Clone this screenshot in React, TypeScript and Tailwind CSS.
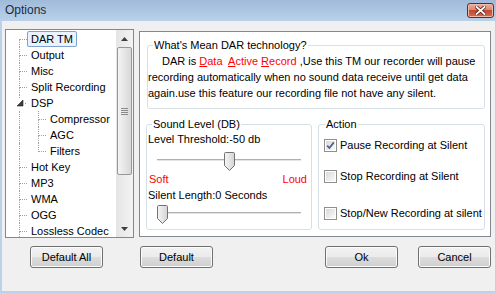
import type { ReactNode } from 'react';

type TreeItem = {
  label: string;
  child?: boolean;
  selected?: boolean;
  expander?: boolean;
  first?: boolean;
  lastChild?: boolean;
};

const treeItems: TreeItem[] = [
  { label: 'DAR TM', selected: true, first: true },
  { label: 'Output' },
  { label: 'Misc' },
  { label: 'Split Recording' },
  { label: 'DSP', expander: true },
  { label: 'Compressor', child: true },
  { label: 'AGC', child: true },
  { label: 'Filters', child: true, lastChild: true },
  { label: 'Hot Key' },
  { label: 'MP3' },
  { label: 'WMA' },
  { label: 'OGG' },
  { label: 'Lossless Codec' },
];

function Elbow({ first = false, last = false }: { first?: boolean; last?: boolean }) {
  return (
    <div className="flex w-[8px] shrink-0 flex-col">
      <div
        className={
          first
            ? 'h-[9px] border-b border-dotted border-[#a0a0a0]'
            : 'h-[9px] border-b border-l border-dotted border-[#a0a0a0]'
        }
      />
      <div className={last ? 'flex-1' : 'flex-1 border-l border-dotted border-[#a0a0a0]'} />
    </div>
  );
}

function TreeRow({ item }: { item: TreeItem }) {
  let gutter: ReactNode;
  if (item.expander) {
    gutter = (
      <svg width="21" height="16" className="shrink-0">
        <line x1="13.5" y1="0" x2="13.5" y2="3" stroke="#a0a0a0" strokeDasharray="1 1" />
        <polygon points="17,5 17,11 11,11" fill="#3c3c3c" stroke="#262626" strokeWidth="0.6" />
        <line x1="19" y1="8.5" x2="21" y2="8.5" stroke="#a0a0a0" strokeDasharray="1 1" />
      </svg>
    );
  } else if (item.child) {
    gutter = (
      <>
        <div className="w-[13px] shrink-0" />
        <div className="w-[19px] shrink-0 border-l border-dotted border-[#a0a0a0]" />
        <Elbow last={item.lastChild} />
      </>
    );
  } else {
    gutter = (
      <>
        <div className="w-[13px] shrink-0" />
        <Elbow first={item.first} />
      </>
    );
  }

  return (
    <div className="flex h-[16px] shrink-0 items-stretch">
      {gutter}
      <span
        className={
          item.selected
            ? 'rounded-[2px] border border-[#7da2ce] bg-[#eaf3fd] px-[3px] leading-[14px] whitespace-nowrap'
            : 'border border-transparent px-[3px] leading-[14px] whitespace-nowrap'
        }
      >
        {item.label}
      </span>
    </div>
  );
}

function ScrollBar() {
  return (
    <div className="flex w-[17px] shrink-0 flex-col bg-gradient-to-r from-[#e5e5e5] to-[#f3f3f3]">
      <div className="flex h-[17px] shrink-0 items-center justify-center">
        <svg width="7" height="4">
          <polygon points="3.5,0 7,4 0,4" fill="#3f3f3f" />
        </svg>
      </div>
      <div className="mx-[1px] flex h-[128px] shrink-0 flex-col items-center justify-center gap-[1px] rounded-[2px] border border-[#979797] bg-gradient-to-r from-[#f4f4f4] to-[#d8d8d8]">
        <div className="h-[1px] w-[7px] bg-[#8a8a8a]" />
        <div className="h-[1px] w-[7px] bg-[#8a8a8a]" />
        <div className="h-[1px] w-[7px] bg-[#8a8a8a]" />
        <div className="h-[1px] w-[7px] bg-[#8a8a8a]" />
      </div>
      <div className="flex-1" />
      <div className="flex h-[17px] shrink-0 items-center justify-center">
        <svg width="7" height="4">
          <polygon points="0,0 7,0 3.5,4" fill="#3f3f3f" />
        </svg>
      </div>
    </div>
  );
}

function Trackbar({ value, min, max }: { value: number; min: number; max: number }) {
  const left = Math.round(((value - min) / (max - min)) * (144 - 11));
  return (
    <div className="relative ml-[10px] h-[19px] w-[144px]">
      <div className="absolute left-0 right-0 top-[7px] h-[2px] border-t border-[#b0b0b0] bg-[#e4e4e4]" />
      <svg className="absolute top-0" style={{ left }} width="11" height="19" viewBox="0 0 11 19">
        <defs>
          <linearGradient id={`thumb${value}`} x1="0" y1="0" x2="1" y2="0">
            <stop offset="0" stopColor="#f6f6f6" />
            <stop offset="1" stopColor="#d4d4d4" />
          </linearGradient>
        </defs>
        <path
          d="M0.5 1.5 Q0.5 0.5 1.5 0.5 H9.5 Q10.5 0.5 10.5 1.5 V13.5 L5.5 18.5 L0.5 13.5 Z"
          fill={`url(#thumb${value})`}
          stroke="#727272"
        />
      </svg>
    </div>
  );
}

function CheckBox({ checked = false }: { checked?: boolean }) {
  return (
    <span className="flex h-[13px] w-[13px] shrink-0 border border-[#8e8f8f] bg-white p-[1px]">
      <span className="flex h-full w-full items-center justify-center bg-gradient-to-br from-[#d9d9d9] to-[#fafafa]">
        {checked && (
          <svg width="9" height="9" viewBox="0 0 9 9">
            <path d="M1.2 4.6 L3.4 7 L7.8 1.4" fill="none" stroke="#4b5e93" strokeWidth="1.7" />
          </svg>
        )}
      </span>
    </span>
  );
}

function WinButton({ label, className = '' }: { label: string; className?: string }) {
  return (
    <button
      className={`flex h-[22px] w-[73px] shrink-0 items-center justify-center rounded-[3px] border border-[#707070] bg-[linear-gradient(#f2f2f2,#ebebeb_50%,#dddddd_50%,#cfcfcf)] text-[11px] text-black shadow-[inset_0_0_0_1px_#fbfbfb] ${className}`}
    >
      {label}
    </button>
  );
}

const groupBox = 'rounded-[3px] border border-[#d5dfe5]';

export default function App() {
  return (
    <div className="flex h-[293px] w-[496px] flex-col overflow-hidden bg-[#bad2ea] font-['Liberation_Sans',Arial,sans-serif] text-[11px] text-black">
      {/* title bar */}
      <div className="flex h-[21px] shrink-0 justify-between bg-gradient-to-b from-[#a0bbd9] to-[#b9d1ea] pl-[5px] pr-[2px]">
        <span className="pt-[3px] text-[12px] leading-[15px] text-[#1b2b3f]">Options</span>
        <div className="mt-[3px] flex h-[15px] w-[27px] items-center justify-center rounded-[3px] border border-[#6b2a1f] bg-[linear-gradient(#eab0a2,#d88a76_45%,#c24a2e_50%,#d56c52)] shadow-[inset_0_0_0_1px_#f0b9a9]">
          <svg width="11" height="9" viewBox="0 0 11 9">
            <path d="M1.5 1 L9.5 8 M9.5 1 L1.5 8" stroke="#5a2014" strokeWidth="3.4" strokeLinecap="square" />
            <path d="M1.5 1 L9.5 8 M9.5 1 L1.5 8" stroke="#ffffff" strokeWidth="1.8" strokeLinecap="square" />
          </svg>
        </div>
      </div>

      {/* dialog body */}
      <div className="mb-[2px] ml-[2px] mr-[1px] flex flex-1 flex-col bg-[#f0f0f0]">
        <div className="flex items-start gap-[5px] pl-[3px] pr-[4px] pt-[8px]">
          {/* tree */}
          <div className="flex h-[209px] w-[129px] shrink-0 overflow-hidden border border-[#828790] bg-white">
            <div className="flex flex-1 flex-col overflow-hidden pt-[1px]">
              {treeItems.map((item) => (
                <TreeRow key={item.label} item={item} />
              ))}
            </div>
            <ScrollBar />
          </div>

          {/* page */}
          <div className="mt-[2px] flex h-[206px] w-[352px] shrink-0 flex-col border border-[#828790] bg-white">
            <fieldset className={`ml-[7px] mt-[7px] h-[70px] w-[338px] ${groupBox}`}>
              <legend className="ml-[5px] px-[1px] leading-[13px]">What's Mean DAR technology?</legend>
              <div className="pt-[1px] leading-[16px] whitespace-nowrap">
                <div className="pl-[14px]">
                  DAR is{' '}
                  <span className="text-[#ff0000]">
                    <span className="underline">D</span>ata&nbsp; <span className="underline">A</span>ctive{' '}
                    <span className="underline">R</span>ecord
                  </span>{' '}
                  ,Use this TM our recorder will pause
                </div>
                <div>recording automatically when no sound data receive until get data</div>
                <div>again.use this feature our recording file not have any silent.</div>
              </div>
            </fieldset>

            <div className="ml-[6px] mt-[9px] flex gap-[6px]">
              <fieldset className={`h-[112px] w-[166px] ${groupBox}`}>
                <legend className="ml-[5px] px-[1px] leading-[13px]">Sound Level (DB)</legend>
                <div className="pl-[1px] pt-[1px] leading-[14px]">Level Threshold:-50 db</div>
                <div className="mt-[6px]">
                  <Trackbar value={-50} min={-100} max={0} />
                </div>
                <div className="mt-[1px] flex justify-between pl-[2px] pr-[4px] leading-[14px] text-[#ff0000]">
                  <span>Soft</span>
                  <span>Loud</span>
                </div>
                <div className="mt-[2px] pl-[1px] leading-[14px]">Silent Length:0 Seconds</div>
                <div className="mt-[3px]">
                  <Trackbar value={0} min={0} max={60} />
                </div>
              </fieldset>

              <fieldset className={`h-[112px] w-[167px] ${groupBox}`}>
                <legend className="ml-[6px] px-[1px] leading-[13px]">Action</legend>
                <div className="ml-[5px] mt-[7px] flex h-[14px] items-center gap-[3px]">
                  <CheckBox checked />
                  <span className="whitespace-nowrap">Pause Recording at Silent</span>
                </div>
                <div className="ml-[5px] mt-[17px] flex h-[14px] items-center gap-[3px]">
                  <CheckBox />
                  <span className="whitespace-nowrap">Stop Recording at Silent</span>
                </div>
                <div className="ml-[5px] mt-[23px] flex h-[14px] items-center gap-[3px]">
                  <CheckBox />
                  <span className="whitespace-nowrap">Stop/New Recording at silent</span>
                </div>
              </fieldset>
            </div>
          </div>
        </div>

        {/* buttons */}
        <div className="mt-[8px] flex pl-[28px] pr-[4px]">
          <WinButton label="Default All" />
          <WinButton label="Default" className="ml-[37px]" />
          <WinButton label="Ok" className="ml-auto" />
          <WinButton label="Cancel" className="ml-[20px]" />
        </div>
      </div>
    </div>
  );
}
